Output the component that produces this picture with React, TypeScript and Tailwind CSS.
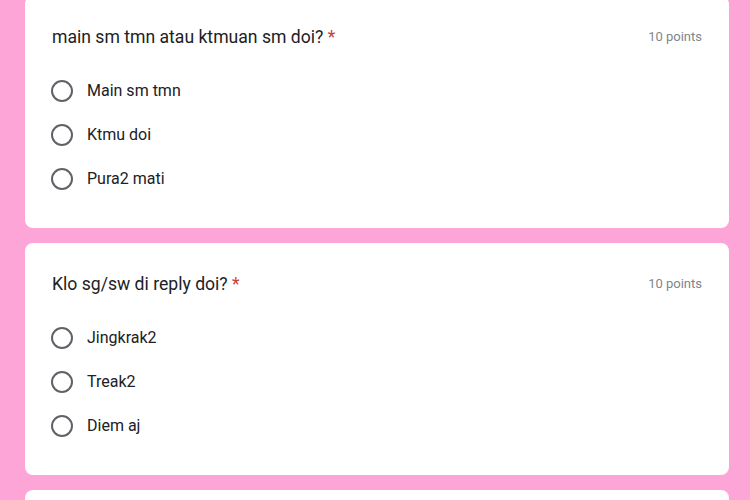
type Question = {
  title: string;
  points: number;
  options: string[];
};

const questions: Question[] = [
  {
    title: "main sm tmn atau ktmuan sm doi?",
    points: 10,
    options: ["Main sm tmn", "Ktmu doi", "Pura2 mati"],
  },
  {
    title: "Klo sg/sw di reply doi?",
    points: 10,
    options: ["Jingkrak2", "Treak2", "Diem aj"],
  },
];

function QuestionCard({ q }: { q: Question }) {
  return (
    <div className="bg-white rounded-lg pl-[27px] pr-[27px] pt-[29px] pb-[27px] h-[232px]">
      <div className="flex items-center justify-between h-6">
        <div className="text-[17.6px] text-[#202124]">
          {q.title} <span className="text-[#c5403a]">*</span>
        </div>
        <div className="text-[13px] text-[#80868b]">{q.points} points</div>
      </div>
      <div className="mt-5 flex flex-col">
        {q.options.map((opt) => (
          <label key={opt} className="flex items-center h-11 cursor-pointer">
            <span className="w-[22px] h-[22px] rounded-full border-2 border-[#5f6368] shrink-0 -ml-px" />
            <span className="ml-[14px] text-[16px] text-[#202124]">{opt}</span>
          </label>
        ))}
      </div>
    </div>
  );
}

export default function App() {
  return (
    <div
      className="w-[750px] h-[500px] overflow-hidden bg-[#fda5d7]"
      style={{ fontFamily: "Roboto, 'Liberation Sans', sans-serif" }}
    >
      <div className="-mt-1 pl-[25px] pr-[21px] flex flex-col gap-[15px]">
        {questions.map((q) => (
          <QuestionCard key={q.title} q={q} />
        ))}
        <div className="bg-white rounded-lg h-[232px]" />
      </div>
    </div>
  );
}
